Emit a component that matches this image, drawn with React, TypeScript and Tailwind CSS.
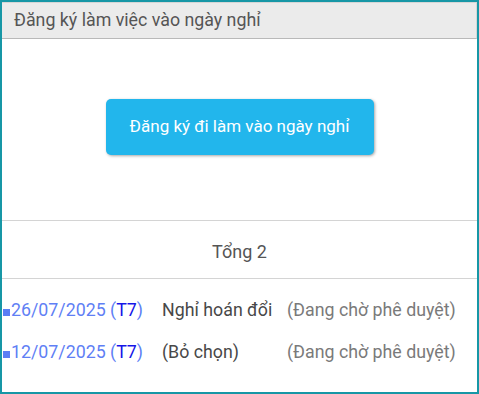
import React from "react";

export default function App() {
  const rows = [
    { date: "26/07/2025", day: "T7", type: "Nghỉ hoán đổi", status: "(Đang chờ phê duyệt)" },
    { date: "12/07/2025", day: "T7", type: "(Bỏ chọn)", status: "(Đang chờ phê duyệt)" },
  ];
  return (
    <div
      className="w-[479px] h-[394px] bg-white border-2 border-[#1797a6] flex flex-col overflow-hidden"
      style={{ fontFamily: "Roboto, 'Noto Sans', sans-serif" }}
    >
      <div className="h-[37px] bg-[#ebebeb] border-t border-[#d6d6d6] border-r border-b border-b-[#b9b9b9] flex items-center pl-[12px] text-[17.8px] text-[#555555]">
        Đăng ký làm việc vào ngày nghỉ
      </div>
      <div className="h-[182px] flex items-center justify-center border-b border-[#d4d4d4]">
        <button className="w-[268px] h-[56px] mb-[6px] rounded-[5px] bg-[#22b6ec] text-white text-[17px] shadow-[1px_1px_3px_rgba(0,0,0,0.35)]">
          Đăng ký đi làm vào ngày nghỉ
        </button>
      </div>
      <div className="h-[58px] pt-[4px] flex items-center justify-center border-b border-[#d4d4d4] text-[18px] text-[#555555]">
        Tổng 2
      </div>
      <div className="flex flex-col pt-[20px] gap-[20px] text-[17.8px]">
        {rows.map((r, i) => (
          <div key={i} className="flex items-center h-[22px]">
            <span className="w-[7px] h-[7px] bg-[#5b7ef5] ml-[1px] mr-[1px] mt-[4px]" />
            <span className="w-[151px] text-[#5f7ff5]">
              {r.date} (<span className="text-[#1515e8]">{r.day}</span>)
            </span>
            <span className="w-[125px] text-[#484848]">{r.type}</span>
            <span className="text-[#7a7a7a]">{r.status}</span>
          </div>
        ))}
      </div>
    </div>
  );
}
